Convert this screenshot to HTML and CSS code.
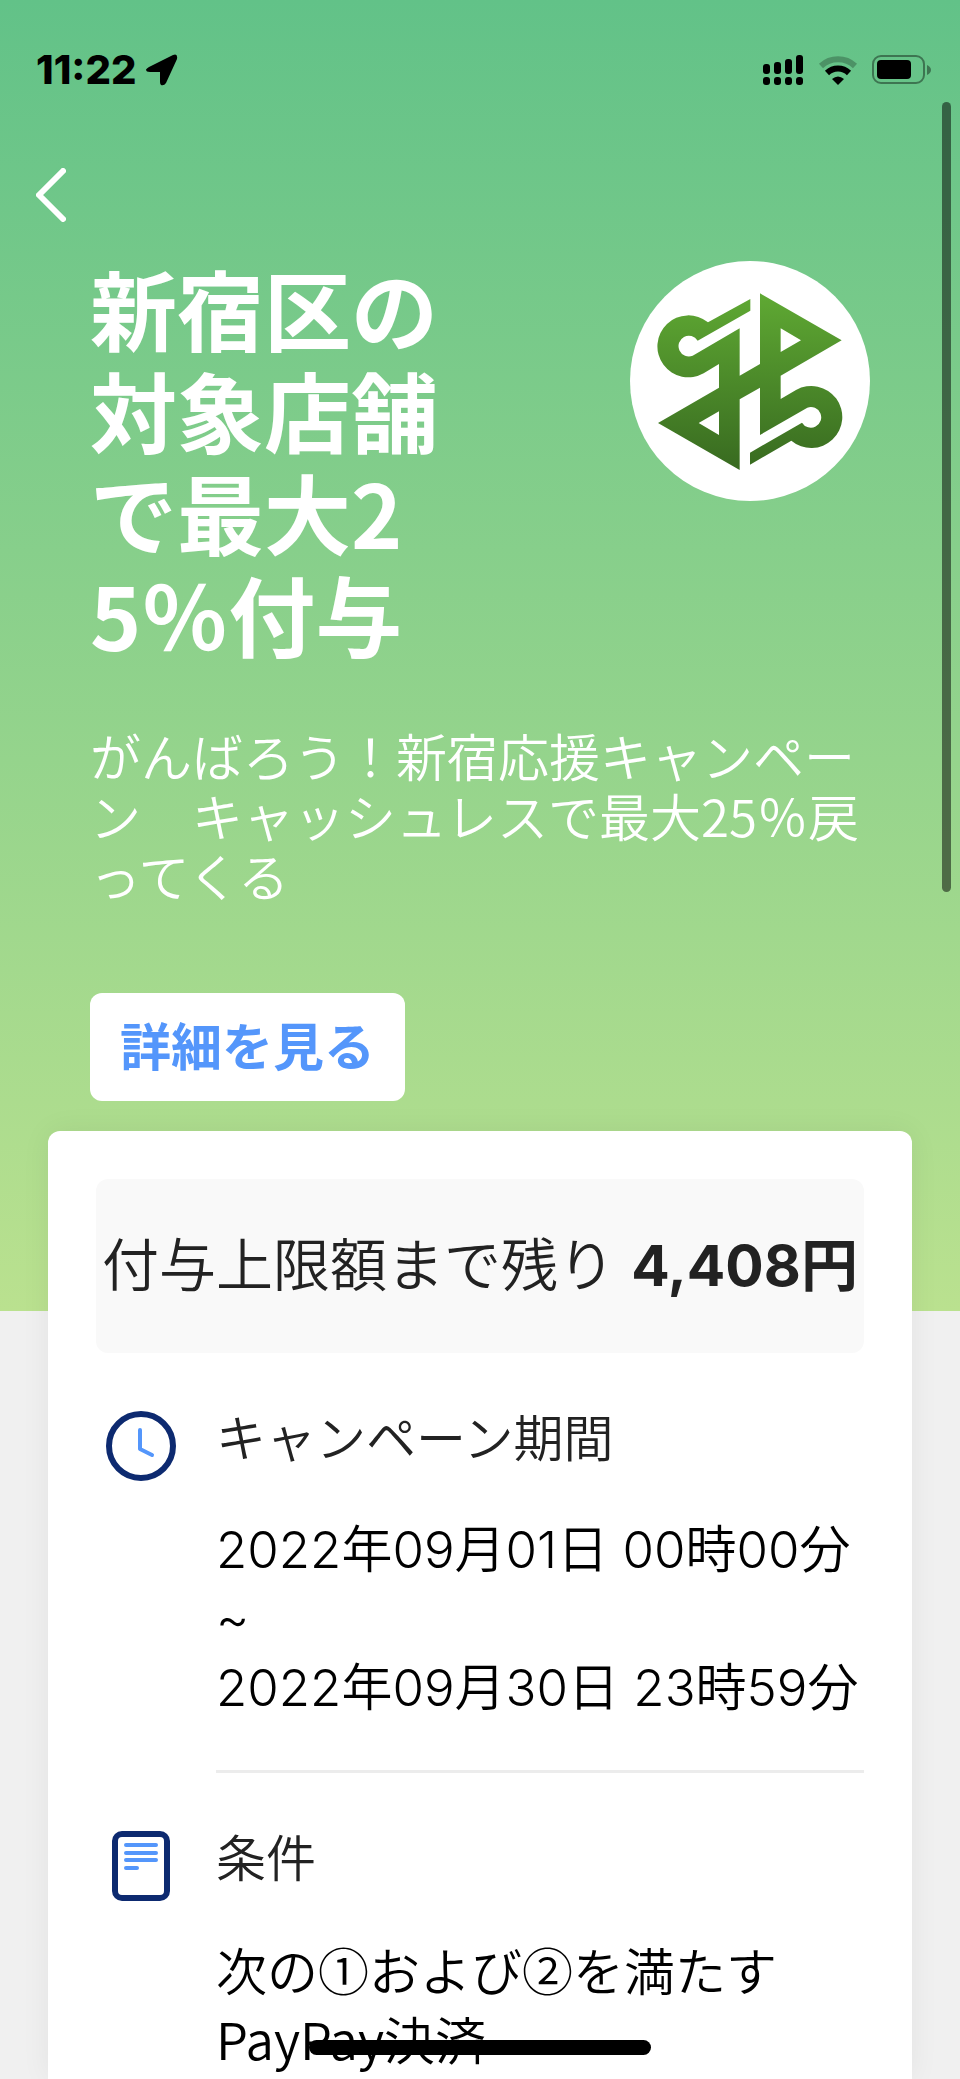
FILE: index.html
```html
<!DOCTYPE html>
<html lang="ja">

<head>
    <meta charset="UTF-8">
    <meta name="viewport" content="width=device-width, initial-scale=1">
    <title>新宿区の対象店舗で最大25%付与</title>
    <link rel="stylesheet" href="styles.css">
</head>

<body>
    <header class="hero">
        <div class="status">
            <span class="time">11:22</span>
            <svg class="location" viewBox="0 0 32 32" width="32" height="32">
                <path d="M3 13 L27 1 Q32 -1 31 5 L20 29 Q18 32 15 31 Q14 30 14 28 V18 H4 Q0 18 0 15.500 Q1 14 3 13Z"/>
            </svg>
            <span class="status-icons">
                <svg viewBox="0 0 42 32" width="42" height="32">
                    <rect x="1" y="10" width="7" height="10" rx="3"/>
                    <rect x="12" y="8" width="7" height="12" rx="3"/>
                    <rect x="23" y="5" width="7" height="15" rx="3"/>
                    <rect x="34" y="1" width="7" height="19" rx="3"/>
                    <rect x="1" y="23" width="7" height="8" rx="3"/>
                    <rect x="12" y="23" width="7" height="8" rx="3"/>
                    <rect x="23" y="23" width="7" height="8" rx="3"/>
                    <rect x="34" y="23" width="7" height="8" rx="3"/>
                </svg>
                <svg viewBox="0 0 40 30" width="40" height="30">
                    <path d="M3 11 A25 25 0 0 1 37 11" fill="none" stroke="#000" stroke-opacity=".25" stroke-width="6"/>
                    <path d="M9 18 A16 16 0 0 1 31 18" fill="none" stroke="#000" stroke-width="6"/>
                    <path d="M14 24 Q20 19 26 24 L20 30Z"/>
                </svg>
                <svg viewBox="0 0 60 30" width="60" height="30">
                    <rect x="1" y="1" width="51" height="27" rx="8" fill="none" stroke="#000" stroke-opacity=".4" stroke-width="2"/>
                    <rect x="5" y="5" width="34" height="19" rx="4"/>
                    <path d="M55 10 Q59 12 59 15 Q59 18 55 20Z" fill-opacity=".4"/>
                </svg>
            </span>
        </div>
        <button class="back" type="button" aria-label="戻る">
            <svg viewBox="0 0 30 54" width="30" height="54">
                <path d="M27 3 L3 27 L27 51" fill="none" stroke="#fff" stroke-width="6" stroke-linecap="round" stroke-linejoin="round"/>
            </svg>
        </button>
        <div class="hero-top">
            <h1>新宿区の対象店舗で最大25％付与</h1>
            <svg class="logo" viewBox="90 63 720 720" width="240" height="240">
                <defs>
                    <linearGradient id="leaf" gradientUnits="userSpaceOnUse" x1="0" y1="160" x2="0" y2="690">
                        <stop offset="0" stop-color="#5fa933"/>
                        <stop offset="1" stop-color="#386a20"/>
                    </linearGradient>
                </defs>
                <circle cx="450" cy="423" r="360" fill="#fff"/>
                <path fill="url(#leaf)" fill-rule="evenodd" d="M451 177 V212 L293 302 A31 31 0 1 0 278 347 L419 265 V407 L480 372 V160 L725 301 L542 407 V477 L588 450 A93 93 0 1 1 574 602 L450 674 V638 L606 548 A31 31 0 1 0 622 503 L480 585 V443 L419 478 V690 L174 549 L357 443 V372 L311 400 A93 93 0 1 1 324 247Z M542 265 V336 L603 301Z M357 514 V585 L296 549Z"/>
            </svg>
        </div>
        <p class="lead">がんばろう！新宿応援キャンペーン　キャッシュレスで最大25％戻ってくる</p>
        <button class="detail" type="button">詳細を見る</button>
    </header>

    <main class="card">
        <p class="limit">付与上限額まで残り <b>4,408円</b></p>

        <section class="item">
            <svg class="icon" viewBox="0 0 70 70" width="70" height="70">
                <circle cx="35" cy="35" r="32" fill="none" stroke="#0d2a70" stroke-width="6"/>
                <path d="M34 19 V38 L46 44" fill="none" stroke="#5496fb" stroke-width="4" stroke-linecap="round" stroke-linejoin="round"/>
            </svg>
            <div class="item-body">
                <h2>キャンペーン期間</h2>
                <p>2022年09月01日 00時00分<br>~<br>2022年09月30日 23時59分</p>
            </div>
        </section>

        <section class="item">
            <svg class="icon" viewBox="0 0 70 70" width="70" height="70">
                <rect x="9" y="3" width="52" height="64" rx="7" fill="none" stroke="#0d2a70" stroke-width="6"/>
                <path d="M20 14 H50 M20 22 H50 M20 29 H50 M20 37 H31" stroke="#5496fb" stroke-width="4" stroke-linecap="round"/>
            </svg>
            <div class="item-body">
                <h2>条件</h2>
                <p class="terms">次の①および②を満たす<br>PayPay決済</p>
            </div>
        </section>
    </main>

    <div class="scrollbar"></div>
    <div class="home-bar"></div>
</body>
</html>
```
FILE: styles.css
```css
* {
    box-sizing: border-box;
}

body {
    margin: 0;
    min-height: 100vh;
    display: flex;
    flex-direction: column;
    background-color: #f0f0f0;
    font-family: Inter, "Noto Sans CJK JP", sans-serif;
    color: #000;
}

h1, h2, p {
    margin: 0;
    font-weight: 400;
}

button {
    border: none;
    cursor: pointer;
}

.hero {
    padding: 48px 90px 210px;
    background: linear-gradient(#62c288, #bae18f);
    color: #fff;
    font-family: "Noto Sans CJK JP", sans-serif;
}

/* status bar */
.status {
    display: flex;
    align-items: center;
    height: 44px;
    margin: 0 -62px 0 -54px;
    color: #000;
}

.time {
    font: 800 40px/44px Inter, sans-serif;
}

.location {
    margin-left: 10px;
}

.status-icons {
    display: flex;
    align-items: center;
    gap: 14px;
    margin-left: auto;
}

.back {
    display: block;
    width: 30px;
    height: 54px;
    margin: 76px 0 34px -54px;
    padding: 0;
    background: none;
}

.hero-top {
    display: flex;
    justify-content: space-between;
    align-items: flex-start;
}

.hero h1 {
    width: 354px;
    font-size: 87px;
    line-height: 102px;
    font-weight: 700;
    word-break: break-all;
}

.logo {
    margin-top: 5px;
}

.lead {
    margin-top: 61px;
    font-size: 51px;
    line-height: 60px;
    font-weight: 350;
    word-break: break-all;
    line-break: anywhere;
}

.detail {
    display: block;
    height: 108px;
    margin-top: 88px;
    padding: 0 30px 6px;
    border-radius: 12px;
    background-color: #fff;
    color: #5496fb;
    font: 700 51px/60px "Noto Sans CJK JP", sans-serif;
}

/* campaign card */
.card {
    flex: 1;
    margin: -180px 48px 0;
    padding: 48px 48px 0;
    border-radius: 12px 12px 0 0;
    background-color: #fff;
    box-shadow: 0 0 30px rgba(0, 0, 0, 0.06);
}

.limit {
    padding: 52px 0;
    border-radius: 12px;
    background-color: #f9f9f9;
    color: #222;
    font-size: 57px;
    line-height: 70px;
    font-weight: 350;
    text-align: center;
    white-space: nowrap;
}

.limit b {
    font-weight: 700;
}

.item {
    display: flex;
    gap: 40px;
    padding: 58px 0 0 10px;
}

.icon {
    flex: none;
}

.item-body {
    flex: 1;
    padding-bottom: 48px;
    border-bottom: 3px solid #ececec;
}

.item:last-child .item-body {
    padding-bottom: 0;
    border-bottom: none;
}

.item h2 {
    margin-bottom: 48px;
    color: #222;
    font-size: 50px;
    line-height: 56px;
    font-weight: 350;
}

.item p {
    font-size: 51px;
    line-height: 69px;
    font-weight: 350;
}

.item .terms {
    font-family: "Noto Sans CJK JP", sans-serif;
}

.scrollbar {
    position: fixed;
    top: 102px;
    right: 9px;
    width: 9px;
    height: 38%;
    border-radius: 5px;
    background-color: rgba(0, 0, 0, 0.5);
}

.home-bar {
    position: fixed;
    bottom: 24px;
    left: 50%;
    width: 342px;
    height: 15px;
    margin-left: -171px;
    border-radius: 8px;
    background-color: #000;
}
```
